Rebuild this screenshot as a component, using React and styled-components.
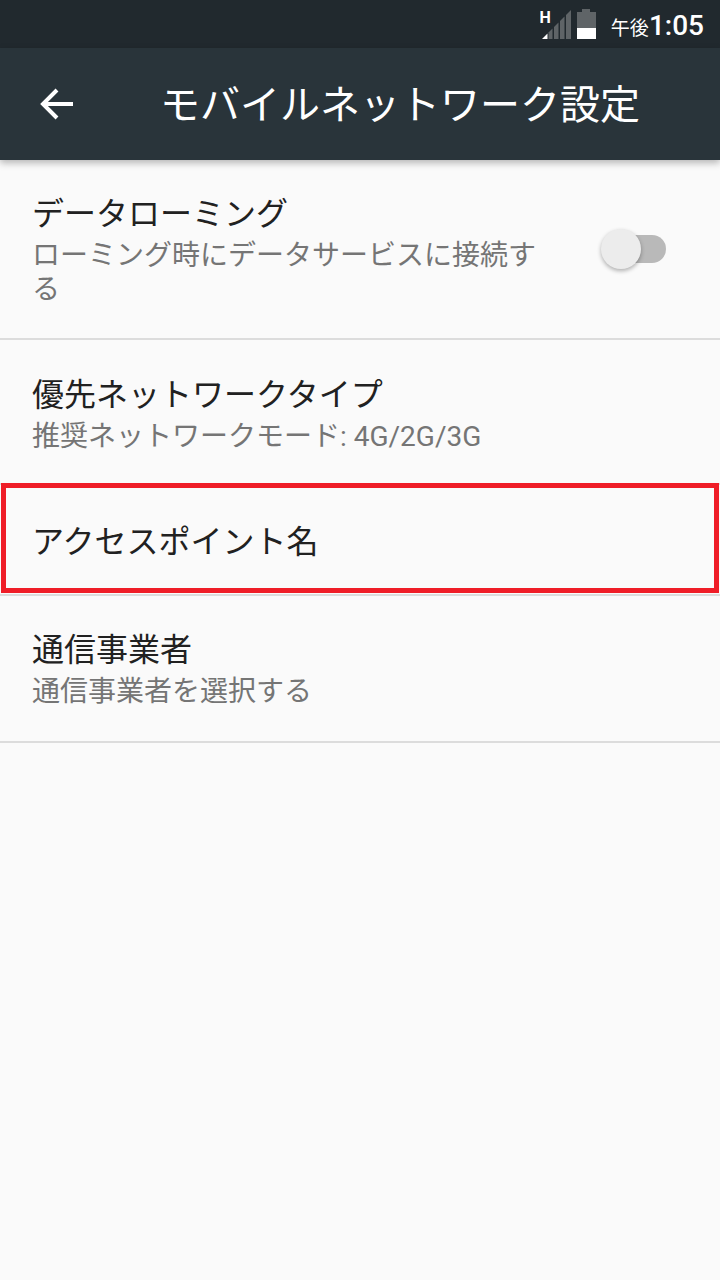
import React from "react";
import styled, { createGlobalStyle } from "styled-components";

const Global = createGlobalStyle`
  html, body { margin: 0; padding: 0; background: #fafafa; }
  body { font-family: Roboto, "Noto Sans CJK JP", sans-serif; }
`;
const Page = styled.div`
  width: 720px; height: 1280px; background: #fafafa; overflow: hidden; display: flex; flex-direction: column;
`;
const StatusBar = styled.div`
  height: 48px; background: #21292e; display: flex; align-items: center; justify-content: flex-end;
  padding-right: 16px; box-sizing: border-box; color: #fff;
`;
const StatusIcons = styled.svg`
  display: block; width: 57px; height: 48px;
`;
const AmPm = styled.span`
  font-size: 19px; line-height: 48px; margin-left: 14px; margin-top: 9px;
`;
const Clock = styled.span`
  font-size: 28px; font-weight: 500; line-height: 48px; margin-top: 3px;
`;
const Toolbar = styled.header`
  height: 112px; background: #29343a; display: flex; align-items: center; color: #fff;
  box-shadow: 0 3px 7px rgba(0,0,0,.28); position: relative; z-index: 1;
`;
const BackButton = styled.div`
  width: 160px; display: flex; padding-left: 40px; box-sizing: border-box;
`;
const Title = styled.h1`
  margin: 0; font-size: 40px; font-weight: 400; line-height: 116px; height: 112px;
`;
const List = styled.div`
  display: flex; flex-direction: column;
`;
const Row = styled.div`
  position: relative; box-sizing: border-box; height: ${p => p.$h}px; padding: ${p => p.$top}px 32px 0;
  display: flex; align-items: flex-start; justify-content: space-between;
  border-bottom: 2px solid #dcdcdc;
`;
const RowText = styled.div`
  width: 510px;
`;
const RowTitle = styled.div`
  font-size: 32px; line-height: 40px; color: #212121;
`;
const RowSub = styled.div`
  font-size: 28px; line-height: 34px; color: #757575; margin-top: 5px;
`;
const Switch = styled.div`
  position: relative; width: 64px; height: 28px; margin: 41px 22px 0 0; background: #b9b9b9; border-radius: 14px;
`;
const Knob = styled.div`
  position: absolute; left: -1px; top: -6px; width: 40px; height: 40px; border-radius: 50%;
  background: #ececec; box-shadow: 0 2px 4px rgba(0,0,0,.3);
`;
const Highlight = styled.div`
  position: absolute; left: 1px; right: 1px; top: -2px; bottom: 1px; box-sizing: border-box; border: 5px solid #ef1d27;
  pointer-events: none;
`;

const bars = [[8.5, 12.5], [14, 18.5], [20, 24.5], [26, 31]];
const barPoints = ([a, b]) => `${a},${41 - a} ${b},${41 - b} ${b},39 ${a},39`;

export default function App() {
  return (
    <Page>
      <Global />
      <StatusBar>
        <StatusIcons viewBox="0 0 57 48">
          <text x="-0.5" y="22.5" fill="#fff" fontFamily="Roboto, sans-serif" fontWeight="700" fontSize="16">H</text>
          <polygon points="2,39 7.500,33.500 7.500,39" fill="#fff" />
          {bars.map(b => <polygon key={b[0]} points={barPoints(b)} fill="#5f6467" />)}
          <path d="M37 12h5V9h8v3h6v16H37z" fill="#5f6467" />
          <path d="M37 28h19v11H37z" fill="#fff" />
        </StatusIcons>
        <AmPm>午後</AmPm>
        <Clock>1:05</Clock>
      </StatusBar>
      <Toolbar>
        <BackButton>
          <svg width="34" height="34" viewBox="0 0 34 34" fill="none" stroke="#fff" strokeWidth="4">
            <path d="M33 17H3M17 3L3 17l14 14" />
          </svg>
        </BackButton>
        <Title>モバイルネットワーク設定</Title>
      </Toolbar>
      <List>
        <Row $h={180} $top={34}>
          <RowText>
            <RowTitle>データローミング</RowTitle>
            <RowSub>ローミング時にデータサービスに接続する</RowSub>
          </RowText>
          <Switch><Knob /></Switch>
        </Row>
        <Row $h={145} $top={35}>
          <RowText>
            <RowTitle>優先ネットワークタイプ</RowTitle>
            <RowSub>推奨ネットワークモード: 4G/2G/3G</RowSub>
          </RowText>
        </Row>
        <Row $h={111} $top={37}>
          <RowText><RowTitle>アクセスポイント名</RowTitle></RowText>
          <Highlight />
        </Row>
        <Row $h={147} $top={34}>
          <RowText>
            <RowTitle>通信事業者</RowTitle>
            <RowSub>通信事業者を選択する</RowSub>
          </RowText>
        </Row>
      </List>
    </Page>
  );
}
